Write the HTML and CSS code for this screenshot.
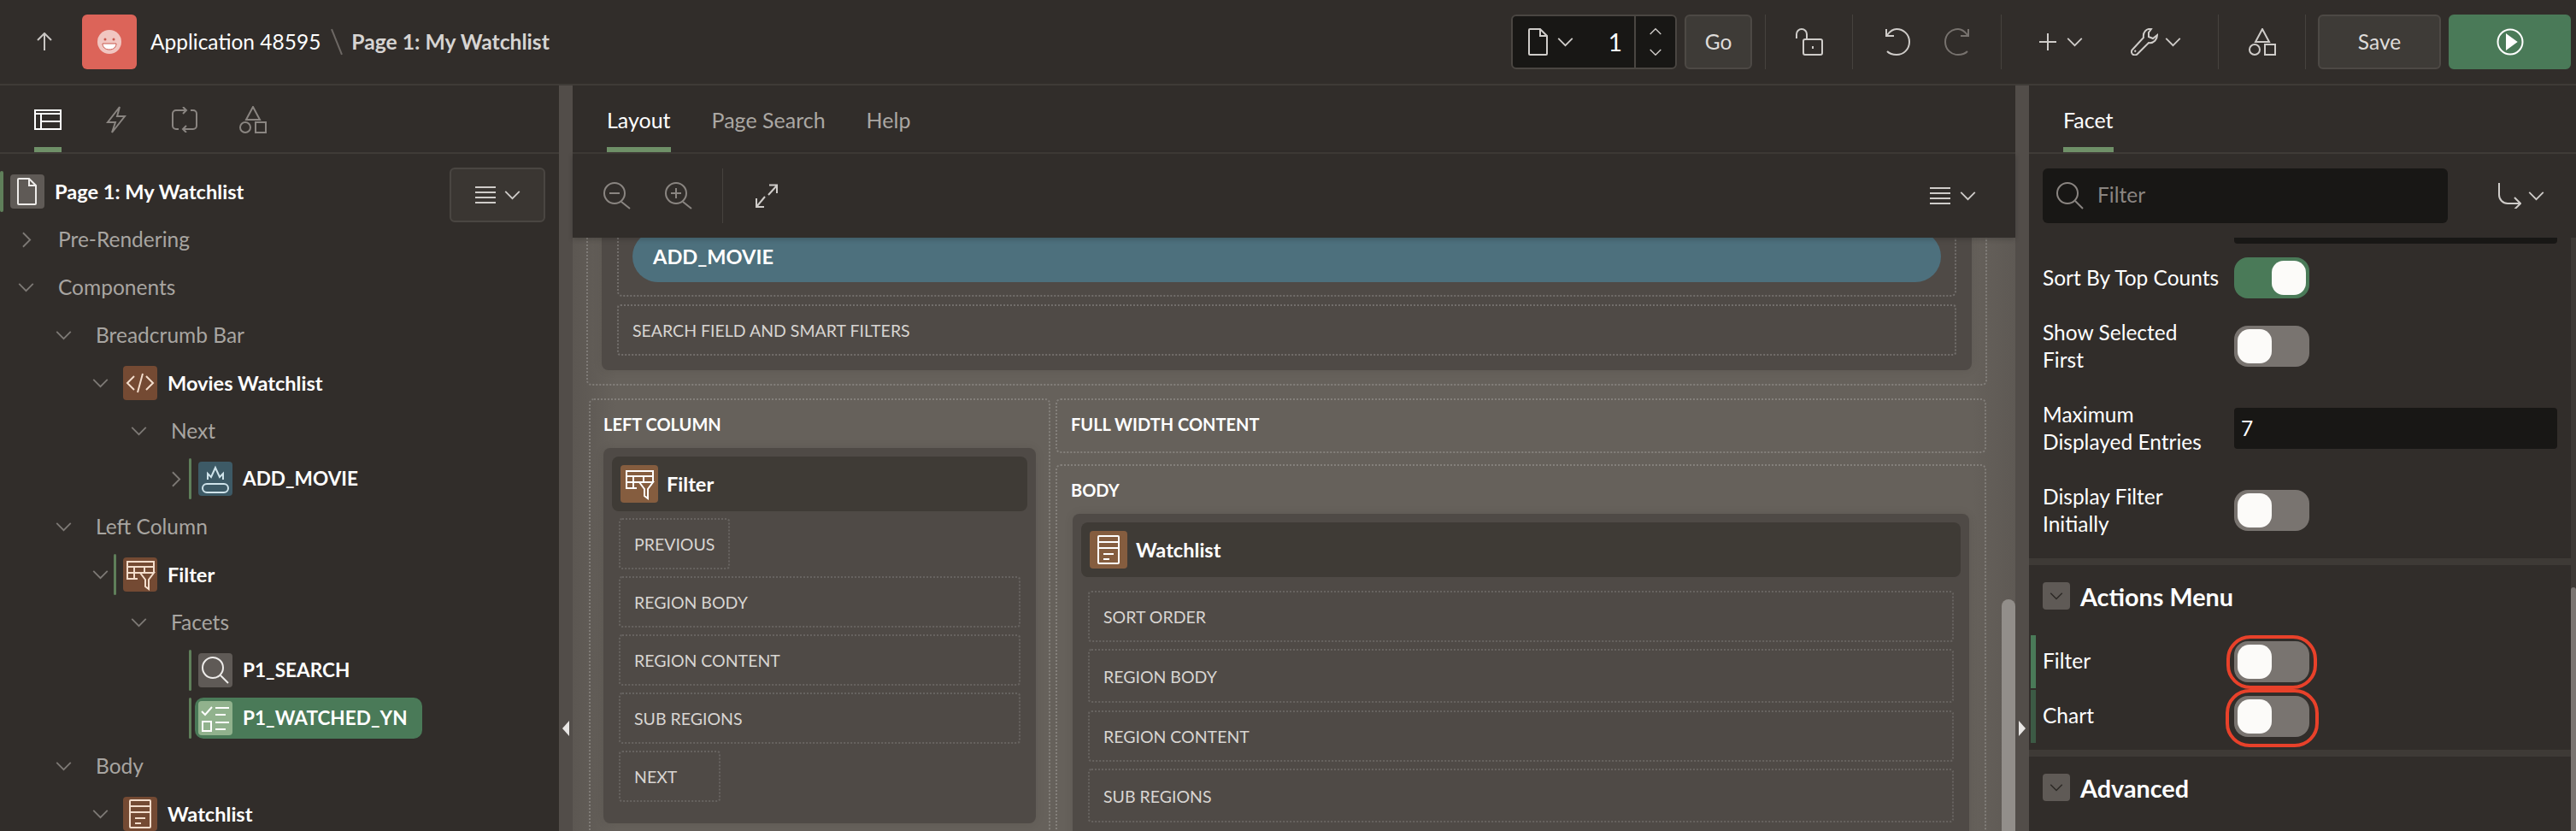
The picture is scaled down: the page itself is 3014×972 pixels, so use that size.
FILE: index.html
```html
<!DOCTYPE html>
<html lang="en">
<head>
<meta charset="utf-8">
<title>Page Designer</title>
<link rel="stylesheet" href="styles.css">
</head>
<body>
<svg class="defs" width="0" height="0" aria-hidden="true">
  <symbol id="chev-d" viewBox="0 0 20 12"><path d="M1 1l9 9 9-9"/></symbol>
  <symbol id="chev-r" viewBox="0 0 12 20"><path d="M1 1l9 9-9 9"/></symbol>
  <symbol id="chev-u" viewBox="0 0 20 12"><path d="M1 11l9-9 9 9"/></symbol>
  <symbol id="arrow-up" viewBox="0 0 18 22"><path d="M9 21V2M1 9l8-8 8 8"/></symbol>
  <symbol id="layout" viewBox="0 0 32 24"><path d="M1 1h30v22H1zM1 5h30M8 5v18M8 14h23"/></symbol>
  <symbol id="bolt" viewBox="0 0 24 32"><path d="M16 1L2 19h9L7 31l15-19h-9z"/></symbol>
  <symbol id="loop" viewBox="0 0 32 30"><path d="M18 4H6a4 4 0 0 0-4 4v14a4 4 0 0 0 4 4h3M14 0l4 4-4 4M23 4h3a4 4 0 0 1 4 4v14a4 4 0 0 1-4 4H14M18 22l-4 4 4 4"/></symbol>
  <symbol id="shapes" viewBox="0 0 32 32"><path d="M16 1l8 15H8zM19 19h12v12H19z"/><circle cx="7" cy="25" r="6"/></symbol>
  <symbol id="doc" viewBox="0 0 24 32"><path d="M2 1h12l8 8v21a1 1 0 0 1-1 1H2a1 1 0 0 1-1-1V2a1 1 0 0 1 1-1zM14 1v8h8"/></symbol>
  <symbol id="menu" viewBox="0 0 24 20"><path d="M0 1h24M0 7h24M0 13h24M0 19h24"/></symbol>
  <symbol id="lock" viewBox="0 0 32 32"><path d="M1 12V7a6 6 0 0 1 12 0v6M11 13h18a2 2 0 0 1 2 2v14a2 2 0 0 1-2 2H11a2 2 0 0 1-2-2V15a2 2 0 0 1 2-2zM20 21v3"/></symbol>
  <symbol id="undo" viewBox="0 0 30 32"><path d="M3 27c4 4 8 4 11 4 8 0 15-6 15-15S22 1 14 1C9 1 6 4 3 8M2 1v8h9"/></symbol>
  <symbol id="redo" viewBox="0 0 30 32"><path d="M27 27c-4 4-8 4-11 4C8 31 1 25 1 16S8 1 16 1c5 0 8 3 11 7M28 1v8h-9"/></symbol>
  <symbol id="plus" viewBox="0 0 20 20"><path d="M10 0v20M0 10h20"/></symbol>
  <symbol id="wrench" viewBox="0 0 32 32"><path d="M24 1c-6-1-10 4-9 10L2 25c-2 2-1 5 1 6s4 0 5-1l13-13c6 1 10-4 10-9l-5 4-5-2V5zM4.500 27.500l1.500-1.500"/></symbol>
  <symbol id="search" viewBox="0 0 32 32"><circle cx="13" cy="13" r="12"/><path d="M22 22l9 9"/></symbol>
  <symbol id="zoom-out" viewBox="0 0 32 32"><circle cx="13" cy="13" r="12"/><path d="M21 23l10 8M7 13h12"/></symbol>
  <symbol id="zoom-in" viewBox="0 0 32 32"><circle cx="13" cy="13" r="12"/><path d="M21 23l10 8M7 13h12M13 7v12"/></symbol>
  <symbol id="expand" viewBox="0 0 26 28"><path d="M15 13L25 2M16 1.500h9V11M11 15L1 27M1 17v10h9"/></symbol>
  <symbol id="goto" viewBox="0 0 28 30"><path d="M2 0v14a10 10 0 0 0 10 10h15M20 17l7 7-7 7"/></symbol>
  <symbol id="code" viewBox="0 0 40 40"><path d="M13 12l-8 8 8 8M27 12l8 8-8 8M23 9l-6 22"/></symbol>
  <symbol id="flame" viewBox="0 0 40 40"><rect x="5" y="26" width="30" height="10" rx="5"/><path d="M11 21v-7l4 4 5-11 5 11 4-4v7"/></symbol>
  <symbol id="filter-table" viewBox="0 0 40 40"><path d="M5 18V5h31v13M5 11h31M5 18h16M5 5v20h12M5 25h12M13 11v14M25 11v7M20 18h16l-6 8v11l-4-3v-8z"/></symbol>
  <symbol id="checks" viewBox="0 0 40 40"><path d="M4 12l4 4 8-9M20 8h16M20 16h12M20 25h16M20 33h12M5 24h10v11H5z"/></symbol>
  <symbol id="region" viewBox="0 0 40 40"><path d="M9 4h22a1 1 0 0 1 1 1v30a1 1 0 0 1-1 1H9a1 1 0 0 1-1-1V5a1 1 0 0 1 1-1zM8 11h24M8 18h24M14 25h12M14 31h7"/></symbol>
</svg>

<div class="app">
  <header class="topbar">
    <button class="up-btn"><svg class="i w18 h22"><use href="#arrow-up"/></svg></button>
    <div class="app-logo">
      <svg class="face" viewBox="0 0 28 28"><circle class="face-bg" cx="14" cy="14" r="14"/><circle class="face-eye" cx="9" cy="11" r="1.500"/><circle class="face-eye" cx="19" cy="11" r="1.500"/><path class="face-mouth" d="M6 16h16c0 4-3 7-8 7s-8-3-8-7z"/></svg>
    </div>
    <span class="crumb-app">Application 48595</span>
    <span class="crumb-slash"></span>
    <span class="crumb-page">Page 1: My Watchlist</span>
    <div class="tools">
      <div class="page-picker">
        <svg class="i w24 h32 pp-doc"><use href="#doc"/></svg>
        <svg class="i chev-sm pp-chev"><use href="#chev-d"/></svg>
        <span class="pp-num">1</span>
        <div class="pp-step">
          <svg class="i chev-xs"><use href="#chev-u"/></svg>
          <svg class="i chev-xs"><use href="#chev-d"/></svg>
        </div>
      </div>
      <button class="tb-btn go">Go</button>
      <span class="tb-sep first"></span>
      <div class="cell cell-lock"><svg class="i w32 h32"><use href="#lock"/></svg></div>
      <span class="tb-sep"></span>
      <div class="cell cell-undo">
        <svg class="i w30 h32"><use href="#undo"/></svg>
        <svg class="i w30 h32 dim"><use href="#redo"/></svg>
      </div>
      <span class="tb-sep"></span>
      <div class="cell cell-add">
        <svg class="i w20 h20"><use href="#plus"/></svg>
        <svg class="i chev-sm m12"><use href="#chev-d"/></svg>
        <svg class="i w32 h32 m56"><use href="#wrench"/></svg>
        <svg class="i chev-sm m8"><use href="#chev-d"/></svg>
      </div>
      <span class="tb-sep"></span>
      <div class="cell cell-shapes"><svg class="i w32 h32"><use href="#shapes"/></svg></div>
      <span class="tb-sep"></span>
      <button class="tb-btn save">Save</button>
      <button class="tb-btn run">
        <svg class="play" viewBox="0 0 32 32"><circle cx="16" cy="16" r="14.500"/><path d="M12 8l11 8-11 8z"/></svg>
      </button>
    </div>
  </header>

  <div class="main">
    <aside class="left">
      <nav class="tabs icon-tabs">
        <a class="itab on"><svg class="i w32 h24"><use href="#layout"/></svg></a>
        <a class="itab"><svg class="i w24 h32"><use href="#bolt"/></svg></a>
        <a class="itab"><svg class="i w32 h30"><use href="#loop"/></svg></a>
        <a class="itab"><svg class="i w32 h32"><use href="#shapes"/></svg></a>
      </nav>
      <div class="tree">
        <div class="row root">
          <span class="bar on"></span>
          <span class="node n-gray"><svg class="i w24 h32"><use href="#doc"/></svg></span>
          <span class="t-strong">Page 1: My Watchlist</span>
          <button class="tree-menu"><svg class="i w24 h20"><use href="#menu"/></svg><svg class="i chev-sm"><use href="#chev-d"/></svg></button>
        </div>
        <div class="row lv0"><span class="twist wide"><svg class="i chev-r"><use href="#chev-r"/></svg></span><span class="t-dim">Pre-Rendering</span></div>
        <div class="row lv0"><span class="twist wide"><svg class="i chev-d"><use href="#chev-d"/></svg></span><span class="t-dim">Components</span></div>
        <div class="row lv1"><span class="twist wide"><svg class="i chev-d"><use href="#chev-d"/></svg></span><span class="t-dim">Breadcrumb Bar</span></div>
        <div class="row lv2"><span class="twist"><svg class="i chev-d"><use href="#chev-d"/></svg></span><span class="bar"></span><span class="node n-brown"><svg class="i n-svg"><use href="#code"/></svg></span><span class="t-strong">Movies Watchlist</span></div>
        <div class="row lv3"><span class="twist wide"><svg class="i chev-d"><use href="#chev-d"/></svg></span><span class="t-dim">Next</span></div>
        <div class="row lv4"><span class="twist"><svg class="i chev-r"><use href="#chev-r"/></svg></span><span class="bar on"></span><span class="node n-teal"><svg class="i n-svg"><use href="#flame"/></svg></span><span class="t-strong t-caps">ADD_MOVIE</span></div>
        <div class="row lv1"><span class="twist wide"><svg class="i chev-d"><use href="#chev-d"/></svg></span><span class="t-dim">Left Column</span></div>
        <div class="row lv2"><span class="twist"><svg class="i chev-d"><use href="#chev-d"/></svg></span><span class="bar on"></span><span class="node n-brown"><svg class="i n-svg"><use href="#filter-table"/></svg></span><span class="t-strong">Filter</span></div>
        <div class="row lv3"><span class="twist wide"><svg class="i chev-d"><use href="#chev-d"/></svg></span><span class="t-dim">Facets</span></div>
        <div class="row lv4"><span class="twist"></span><span class="bar on"></span><span class="node n-gray"><svg class="i w32 h32"><use href="#search"/></svg></span><span class="t-strong t-caps">P1_SEARCH</span></div>
        <div class="row lv4"><span class="twist"></span><span class="bar on tight"></span><span class="sel"><span class="node n-sel"><svg class="i n-svg"><use href="#checks"/></svg></span><span class="t-strong t-caps">P1_WATCHED_YN</span></span></div>
        <div class="row lv1"><span class="twist wide"><svg class="i chev-d"><use href="#chev-d"/></svg></span><span class="t-dim">Body</span></div>
        <div class="row lv2"><span class="twist"><svg class="i chev-d"><use href="#chev-d"/></svg></span><span class="bar"></span><span class="node n-brown"><svg class="i n-svg"><use href="#region"/></svg></span><span class="t-strong">Watchlist</span></div>
      </div>
    </aside>

    <div class="split"><span class="tri tri-l"></span></div>

    <section class="center">
      <nav class="tabs text-tabs">
        <a class="ttab on">Layout</a>
        <a class="ttab">Page Search</a>
        <a class="ttab">Help</a>
      </nav>
      <div class="layout-tools">
        <svg class="i w32 h32 dim2"><use href="#zoom-out"/></svg>
        <svg class="i w32 h32 dim2 ml40"><use href="#zoom-in"/></svg>
        <span class="lt-sep"></span>
        <svg class="i w26 h28 soft"><use href="#expand"/></svg>
        <span class="lt-menu"><svg class="i w24 h20 soft"><use href="#menu"/></svg><svg class="i chev-sm soft"><use href="#chev-d"/></svg></span>
      </div>
      <div class="canvas">
        <div class="canvas-inner">
          <div class="dz dz-top">
            <div class="card card-top">
              <div class="dz dz-buttons"><div class="pill">ADD_MOVIE</div></div>
              <div class="dz dz-slot slot-search">SEARCH FIELD AND SMART FILTERS</div>
            </div>
          </div>
          <div class="columns">
            <div class="dz col-left">
              <h3 class="dz-title">LEFT COLUMN</h3>
              <div class="card card-region">
                <div class="region-head"><span class="rh-icon"><svg class="i rh-svg"><use href="#filter-table"/></svg></span><span class="rh-name">Filter</span></div>
                <div class="dz dz-slot fit-prev">PREVIOUS</div>
                <div class="dz dz-slot">REGION BODY</div>
                <div class="dz dz-slot">REGION CONTENT</div>
                <div class="dz dz-slot">SUB REGIONS</div>
                <div class="dz dz-slot fit-next">NEXT</div>
              </div>
            </div>
            <div class="col-right">
              <div class="dz dz-full"><h3 class="dz-title">FULL WIDTH CONTENT</h3></div>
              <div class="dz dz-body">
                <h3 class="dz-title">BODY</h3>
                <div class="card card-region card-main">
                  <div class="region-head"><span class="rh-icon"><svg class="i rh-svg"><use href="#region"/></svg></span><span class="rh-name">Watchlist</span></div>
                  <div class="dz dz-slot first">SORT ORDER</div>
                  <div class="dz dz-slot tall">REGION BODY</div>
                  <div class="dz dz-slot after-tall">REGION CONTENT</div>
                  <div class="dz dz-slot tall">SUB REGIONS</div>
                </div>
              </div>
            </div>
          </div>
        </div>
        <div class="vscroll"></div>
      </div>
    </section>

    <div class="split"><span class="tri tri-r"></span></div>

    <aside class="right">
      <nav class="tabs text-tabs facet-tabs"><a class="ttab on">Facet</a></nav>
      <div class="prop-search">
        <div class="search-box"><svg class="i w32 h32 dim2"><use href="#search"/></svg><span class="ph">Filter</span></div>
        <span class="goto"><svg class="i w28 h30 soft"><use href="#goto"/></svg><svg class="i chev-sm soft"><use href="#chev-d"/></svg></span>
      </div>
      <div class="props">
        <div class="props-inner">
          <div class="clip-field"></div>
          <div class="prop tight"><label>Sort By Top Counts</label><span class="toggle on"><span class="knob"></span></span></div>
          <div class="prop"><label>Show Selected<br>First</label><span class="toggle"><span class="knob"></span></span></div>
          <div class="prop"><label>Maximum<br>Displayed Entries</label><span class="num-field">7</span></div>
          <div class="prop tight"><label>Display Filter<br>Initially</label><span class="toggle"><span class="knob"></span></span></div>
          <div class="sect-rule"></div>
          <div class="sect-head"><span class="sect-btn"><svg class="i chev-sect"><use href="#chev-d"/></svg></span><span class="sect-name">Actions Menu</span></div>
          <div class="act-row"><span class="act-bar"></span><label>Filter</label><span class="toggle mark-a"><span class="knob"></span></span></div>
          <div class="act-row"><span class="act-bar dark"></span><label>Chart</label><span class="toggle mark-b"><span class="knob"></span></span></div>
          <div class="sect-rule after"></div>
          <div class="sect-head"><span class="sect-btn"><svg class="i chev-sect"><use href="#chev-d"/></svg></span><span class="sect-name">Advanced</span></div>
        </div>
        <div class="props-scroll"><span class="props-thumb"></span></div>
      </div>
    </aside>
  </div>
</div>
</body>
</html>
```
FILE: styles.css
```css
* { box-sizing: border-box; }
html, body { margin: 0; height: 972px; overflow: hidden; }
body { background: #312d2a; color: #fff; font: 400 24.5px/32px Lato, "Noto Sans", sans-serif; }
h3 { margin: 0; font: inherit; }
button { font: inherit; color: inherit; padding: 0; }
.defs { position: absolute; }

.i { display: block; flex: none; fill: none; stroke: currentColor; stroke-width: 2; overflow: visible; }
.w18 { width: 18px; } .w20 { width: 20px; } .w24 { width: 24px; } .w26 { width: 26px; } .w28 { width: 28px; } .w30 { width: 30px; } .w32 { width: 32px; }
.h20 { height: 20px; } .h22 { height: 22px; } .h24 { height: 24px; } .h28 { height: 28px; } .h30 { height: 30px; } .h32 { height: 32px; }
.chev-sm { width: 19px; height: 11px; }
.chev-xs { width: 14px; height: 9px; }
.dim { color: #77726e; }
.dim2 { color: #8a8581; }
.soft { color: #cfccc9; }

.app { display: flex; flex-direction: column; height: 972px; }

/* top bar */
.topbar { height: 100px; flex: none; display: flex; align-items: center; border-bottom: 2px solid #3f3b37; padding-left: 43px; }
.up-btn { width: 18px; background: none; border: 0; margin-right: 35px; color: #c9c6c3; }
.app-logo { width: 64px; height: 64px; background: #dc6459; border-radius: 6px; display: flex; align-items: center; justify-content: center; margin-right: 16px; }
.face { width: 28px; height: 28px; display: block; }
.face-bg { fill: #f1c6c1; }
.face-eye { fill: #c9574d; }
.face-mouth { fill: #fff; stroke: #c9574d; stroke-width: 1; }
.crumb-slash { width: 2px; height: 32px; background: #6d6864; transform: rotate(-22deg); margin: 0 16px 0 18px; }
.crumb-page { font-weight: 700; color: #d6d4d2; font-size: 24.7px; }
.tools { margin-left: auto; display: flex; align-items: center; padding-right: 6px; height: 64px; }
.page-picker { width: 194px; height: 64px; display: flex; align-items: center; background: #181715; border: 2px solid #4a4642; border-radius: 6px; padding-left: 18px; color: #cfccc9; }
.pp-chev { margin-left: 10px; }
.pp-num { margin-left: auto; color: #fff; margin-right: 14px; font-size: 28px; }
.pp-step { width: 48px; align-self: stretch; border-left: 2px solid #4a4642; display: flex; flex-direction: column; align-items: center; justify-content: space-between; padding: 13px 0; }
.tb-btn { height: 64px; border-radius: 6px; background: #3e3b37; border: 2px solid #4d4945; color: #dedcda; font-size: 24.5px; }
.go { width: 79px; margin-left: 9px; }
.tb-sep { width: 1px; height: 64px; background: #46423e; flex: none; }
.tb-sep.first { margin-left: 15px; }
.cell { height: 64px; display: flex; align-items: center; color: #cfccc9; }
.cell-lock { width: 101px; justify-content: center; }
.cell-undo { width: 173px; justify-content: center; gap: 40px; }
.cell-add { width: 253px; padding-left: 44px; }
.m12 { margin-left: 12px; }
.m56 { margin-left: 56px; }
.m8 { margin-left: 8px; }
.cell-shapes { width: 101px; justify-content: center; }
.save { width: 144px; margin-left: 14px; }
.run { width: 143px; margin-left: 9px; background: #4a7a58; border-color: #4a7a58; display: flex; align-items: center; justify-content: center; }
.play { width: 32px; height: 32px; fill: none; stroke: #fff; stroke-width: 2; }
.play path { fill: #fff; }

.main { flex: 1; display: flex; min-height: 0; }
.left { width: 654px; flex: none; overflow: hidden; }
.split { width: 16px; flex: none; background: #524d49; position: relative; }
.tri { position: absolute; top: 743px; width: 0; height: 0; border-top: 9px solid transparent; border-bottom: 9px solid transparent; }
.tri-l { left: 4px; border-right: 8px solid #e8e6e4; }
.tri-r { left: 4px; border-left: 8px solid #e8e6e4; }
.center { width: 1688px; flex: none; display: flex; flex-direction: column; min-height: 0; }
.right { flex: 1; display: flex; flex-direction: column; min-width: 0; min-height: 0; }

/* tabs */
.tabs { height: 80px; flex: none; border-bottom: 2px solid #3f3b37; display: flex; }
.icon-tabs { padding-left: 40px; gap: 48px; }
.itab { width: 32px; height: 78px; display: flex; align-items: center; justify-content: center; padding-top: 8px; color: #8a8581; border-bottom: 6px solid transparent; }
.itab.on { color: #fff; border-bottom-color: #6f9068; }
.text-tabs { padding-left: 40px; gap: 48px; }
.ttab { height: 78px; display: flex; align-items: center; padding-top: 7px; font-size: 25px; color: #aaa7a3; border-bottom: 6px solid transparent; }
.ttab.on { color: #fff; border-bottom-color: #6f9068; }

/* tree */
.tree { padding-top: 16px; }
.row { height: 56px; display: flex; align-items: center; }
.lv0 { padding-left: 20px; } .lv1 { padding-left: 64px; } .lv2 { padding-left: 108px; } .lv3 { padding-left: 152px; } .lv4 { padding-left: 196px; }
.twist { width: 25px; flex: none; color: #7d7975; display: flex; padding-left: 0; }
.twist.wide { width: 48px; padding-left: 1px; }
.chev-d { width: 19px; height: 11px; }
.chev-r { width: 11px; height: 19px; margin-left: 5px; }
.bar { width: 3px; height: 48px; flex: none; margin-right: 8px; border-radius: 2px; }
.bar.on { background: #5f7f5a; }
.bar.tight { margin-right: 4px; }
.root .bar { width: 4px; }
.node { width: 40px; height: 40px; flex: none; border-radius: 4px; display: flex; align-items: center; justify-content: center; margin-right: 12px; color: #fff; }
.n-svg { width: 40px; height: 40px; }
.n-brown { background: #744a33; color: #f3ddcc; }
.n-teal { background: #3d5a66; color: #cfe3ea; }
.n-gray { background: #5f5a56; color: #eeecea; }
.n-sel { background: #91b28d; color: #fff; }
.sel { height: 48px; width: 266px; display: flex; align-items: center; padding-left: 4px; background: #4a7a58; border-radius: 10px; }
.t-strong { font-weight: 700; font-size: 23.6px; color: #fff; white-space: nowrap; }
.t-caps { font-size: 22.6px; }
.t-dim { color: #a8a5a1; white-space: nowrap; }
.tree-menu { align-self: flex-start; margin: 0 16px 0 auto; width: 112px; height: 64px; flex: none; background: #3a3632; border: 2px solid #4a4642; border-radius: 6px; color: #cfccc9; display: flex; align-items: center; justify-content: center; gap: 10px; }

/* layout tools */
.layout-tools { height: 98px; flex: none; display: flex; align-items: center; padding-left: 36px; box-shadow: 0 2px 6px rgba(0,0,0,.2); position: relative; z-index: 2; background: #312d2a; }
.ml40 { margin-left: 40px; }
.lt-sep { width: 1px; height: 64px; background: #46423e; margin: 0 38px 0 35px; }
.lt-menu { margin-left: auto; margin-right: 46px; display: flex; align-items: center; gap: 11px; }

/* canvas */
.canvas { flex: 1; min-height: 0; position: relative; overflow: hidden; background: linear-gradient(90deg, #5c5752, #66615b 3%, #66615b 97%, #5e5954); }
.canvas-inner { margin-top: -69px; padding-left: 16px; width: 1655px; }
.dz { border: 2px dotted rgba(255,255,255,.2); border-radius: 6px; }
.dz-top { padding: 15px 16px 16px; }
.card { background: #4f4a46; border-radius: 8px; box-shadow: 0 0 12px rgba(0,0,0,.08); }
.card-top { padding: 15px 18px 17px; }
.dz-buttons { padding: 27px 16px 15px; }
.pill { height: 60px; background: #4d707d; border-radius: 30px; padding-left: 24px; font-weight: 700; display: flex; align-items: center; font-size: 23.6px; }
.dz-slot { height: 60px; display: flex; align-items: center; padding: 2px 0 0 16px; font-size: 19.5px; color: #d8d5d2; margin-top: 8px; border-radius: 4px; border-color: rgba(255,255,255,.14); }
.slot-search { margin-top: 9px; border-color: rgba(255,255,255,.2); }
.fit-prev { width: 130px; }
.fit-next { width: 119px; }
.columns { display: flex; margin: 15px 0 0 3px; gap: 6px; align-items: flex-start; }
.col-left { width: 540px; height: 560px; padding: 0 15px; }
.dz-title { height: 56px; display: flex; align-items: center; font-weight: 700; font-size: 20px; color: #fff; }
.card-region { padding: 10px 18px 25px 18px; }
.region-head { height: 64px; margin: 0 -8px; background: #3f3b36; border-radius: 8px; display: flex; align-items: center; padding-left: 10px; }
.rh-icon { width: 44px; height: 44px; flex: none; background: #855d3f; border-radius: 4px; display: flex; align-items: center; justify-content: center; color: #fff; margin-right: 10px; }
.rh-svg { width: 40px; height: 40px; }
.rh-name { font-weight: 700; font-size: 23.6px; }
.col-right { width: 1089px; }
.dz-full { height: 64px; padding-left: 16px; }
.dz-body { margin-top: 13px; height: 500px; padding: 0 18px; }
.dz-body .dz-title { margin-left: -2px; }
.card-main { height: 500px; }
.dz-slot.first { margin-top: 16px; }
.dz-slot.tall { height: 63px; }
.dz-slot.after-tall { margin-top: 9px; }
.vscroll { position: absolute; right: 0; top: 423px; width: 16px; height: 300px; background: #928e8a; border-radius: 8px 8px 0 0; }

/* right panel */
.prop-search { height: 98px; flex: none; display: flex; align-items: center; padding-left: 16px; }
.search-box { width: 474px; height: 64px; background: #181715; border-radius: 6px; display: flex; align-items: center; padding-left: 16px; }
.ph { color: #8a8581; margin: -2px 0 0 16px; }
.goto { margin-left: 58px; display: flex; align-items: center; gap: 8px; }
.props { flex: 1; min-height: 0; position: relative; overflow: hidden; }
.props-inner { width: 634px; }
.clip-field { height: 7px; width: 378px; margin-left: 240px; background: #181715; border-radius: 0 0 4px 4px; margin-bottom: 16px; }
.prop { display: flex; padding-left: 16px; margin-bottom: 32px; align-items: center; }
.prop.tight { margin-bottom: 24px; }
.prop label, .act-row label { width: 224px; flex: none; font-size: 24.5px; line-height: 32px; }
.act-row label { margin-top: -2px; }
.toggle { width: 88px; height: 48px; flex: none; border-radius: 16px; background: #797470; padding: 4px; display: block; position: relative; }
.toggle.on { background: #4a7a58; padding-left: 44px; }
.knob { display: block; width: 40px; height: 40px; background: #fcfbf9; border-radius: 14px; }
.num-field { width: 378px; height: 48px; background: #181715; border-radius: 4px; padding-left: 8px; display: flex; align-items: center; }
.sect-rule { height: 8px; background: #3e3a36; }
.sect-rule.after { margin-top: 8px; }
.sect-head { height: 82px; display: flex; padding: 20px 0 0 16px; }
.sect-btn { width: 32px; height: 32px; background: #5f5a56; border-radius: 4px; color: #2c2926; display: flex; align-items: center; justify-content: center; }
.chev-sect { width: 16px; height: 9px; }
.sect-name { font-weight: 700; font-size: 28.8px; line-height: 34px; margin-left: 12px; }
.act-row { height: 62px; display: flex; align-items: center; padding-left: 2px; margin-bottom: 2px; }
.act-bar { width: 6px; height: 62px; background: #4a7a58; margin-right: 8px; flex: none; }
.act-bar.dark { background: #3c5a45; }
.mark-a::after, .mark-b::after { content: ""; position: absolute; border: 4px solid #e8412a; border-radius: 28px; }
.mark-a::after { inset: -7px -9px -8px; }
.mark-b::after { inset: -8px -11px -12px -10px; }
.props-scroll { position: absolute; right: 0; top: 0; bottom: 0; width: 6px; background: #3e3a36; }
.props-thumb { position: absolute; left: 0; top: 409px; bottom: 0; width: 6px; background: #7a7571; border-radius: 4px 4px 0 0; }
```
